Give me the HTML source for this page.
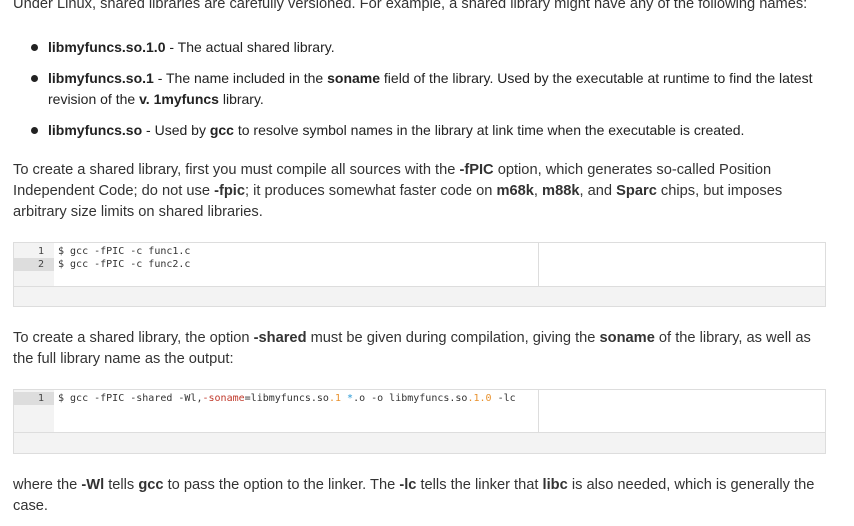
<!DOCTYPE html>
<html><head><meta charset="utf-8"><style>
body{margin:0;width:854px;height:526px;overflow:hidden;background:#fff;color:#333;font-family:"Liberation Sans",sans-serif;position:relative}
.t{position:absolute;left:13px;font-size:14.65px;line-height:21px;white-space:nowrap}
.l{position:absolute;left:48px;font-size:14px;line-height:21px;white-space:nowrap;color:#222}
.d{position:absolute;left:31px;width:7px;height:7px;border-radius:50%;background:#222}
.box{position:absolute;left:13px;width:811px;border:1px solid #ddd;background:#f3f3f3}
.ed{position:absolute;left:0;top:0;width:811px;background:#fff;border-bottom:1px solid #ddd}
.gut{position:absolute;left:0;top:0;width:40px;background:#f3f3f3;height:100%}
.code{position:absolute;font-family:"DejaVu Sans Mono","Liberation Mono",monospace;font-size:10px;line-height:13px;white-space:pre;color:#333}
.ln{position:absolute;left:0;width:30px;text-align:right;font-family:"DejaVu Sans Mono",monospace;font-size:10px;line-height:13px;color:#444}
.div{position:absolute;left:524px;top:0;width:1px;height:100%;background:#ddd}
.r{color:#c0392b}.o{color:#e8912d}.c{color:#2a9ad6}
</style></head><body>
<div class="t" style="top:-6px">Under Linux, shared libraries are carefully versioned. For example, a shared library might have any of the following names:</div>
<div class="d" style="top:44px"></div><div class="l" style="top:37px"><b>libmyfuncs.so.1.0</b> - The actual shared library.</div>
<div class="d" style="top:75px"></div><div class="l" style="top:68px"><b>libmyfuncs.so.1</b> - The name included in the <b>soname</b> field of the library. Used by the executable at runtime to find the latest</div>
<div class="l" style="top:89px">revision of the <b>v. 1myfuncs</b> library.</div>
<div class="d" style="top:127px"></div><div class="l" style="top:120px"><b>libmyfuncs.so</b> - Used by <b>gcc</b> to resolve symbol names in the library at link time when the executable is created.</div>
<div class="t" style="top:160px">To create a shared library, first you must compile all sources with the <b>-fPIC</b> option, which generates so-called Position</div>
<div class="t" style="top:181px">Independent Code; do not use <b>-fpic</b>; it produces somewhat faster code on <b>m68k</b>, <b>m88k</b>, and <b>Sparc</b> chips, but imposes</div>
<div class="t" style="top:202px">arbitrary size limits on shared libraries.</div>

<div class="box" style="top:242px;height:63px">
 <div class="ed" style="height:43px"><div class="gut"></div>
  <div style="position:absolute;left:0;top:15px;width:40px;height:13px;background:#ddd"></div>
  <div class="ln" style="top:2px">1</div><div class="ln" style="top:15px">2</div>
  <div class="code" style="left:44px;top:2px">$ gcc -fPIC -c func1.c
$ gcc -fPIC -c func2.c</div>
  <div class="div"></div></div>
</div>

<div class="t" style="top:328px">To create a shared library, the option <b>-shared</b> must be given during compilation, giving the <b>soname</b> of the library, as well as</div>
<div class="t" style="top:349px">the full library name as the output:</div>

<div class="box" style="top:389px;height:63px">
 <div class="ed" style="height:42px"><div class="gut"></div>
  <div style="position:absolute;left:0;top:2px;width:40px;height:13px;background:#ddd"></div>
  <div class="ln" style="top:2px">1</div>
  <div class="code" style="left:44px;top:2px">$ gcc -fPIC -shared -Wl,<span class="r">-soname</span>=libmyfuncs.so<span class="o">.1</span> <span class="c">*</span>.o -o libmyfuncs.so<span class="o">.1.0</span> -lc</div>
  <div class="div"></div></div>
</div>

<div class="t" style="top:475px">where the <b>-Wl</b> tells <b>gcc</b> to pass the option to the linker. The <b>-lc</b> tells the linker that <b>libc</b> is also needed, which is generally the</div>
<div class="t" style="top:496px">case.</div>
</body></html>
